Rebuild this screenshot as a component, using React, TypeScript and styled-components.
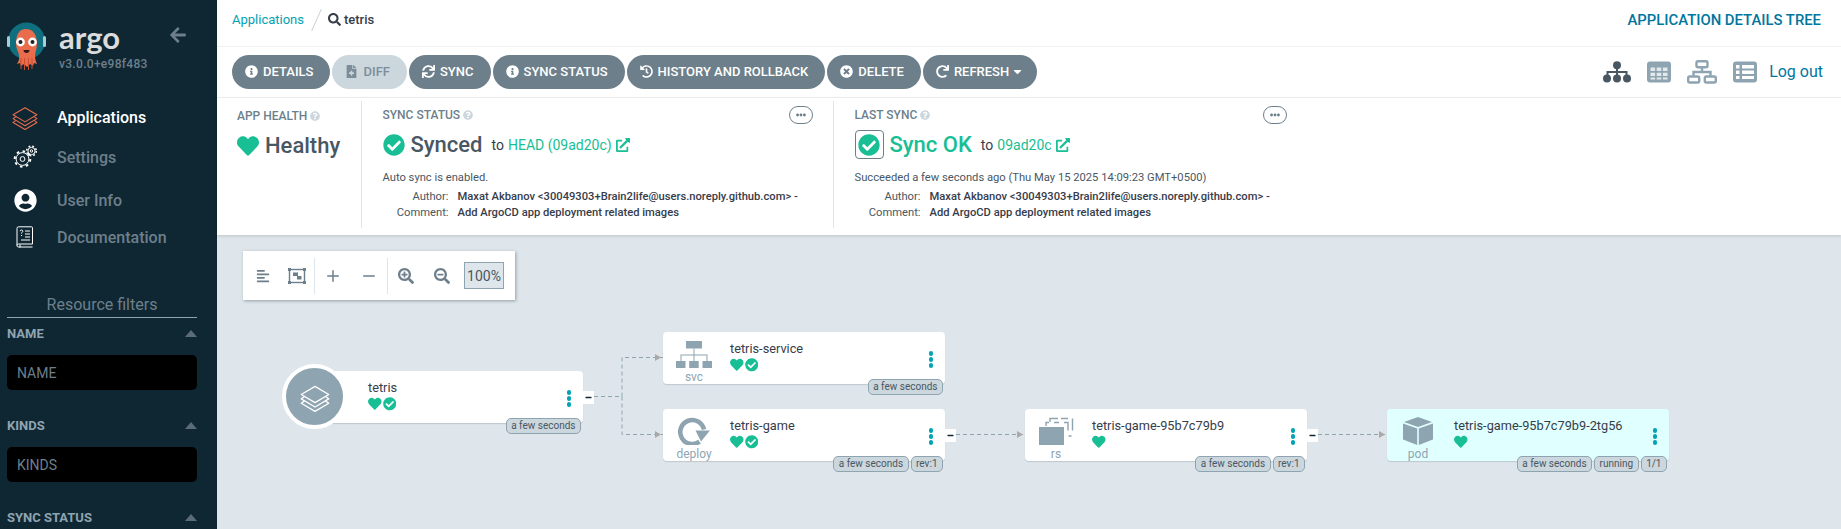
import React from 'react';
import styled, { createGlobalStyle } from 'styled-components';
import {
  FaArrowLeft,
  FaCaretDown,
  FaCheckCircle,
  FaEllipsisH,
  FaExternalLinkAlt,
  FaFileMedical,
  FaHeart,
  FaHistory,
  FaInfoCircle,
  FaMinus,
  FaQuestionCircle,
  FaRedo,
  FaSearch,
  FaSearchMinus,
  FaSearchPlus,
  FaSync,
  FaTimesCircle,
  FaUserCircle,
  FaAlignLeft,
} from 'react-icons/fa';
import { Minus, Plus } from 'lucide-react';

const GlobalStyle = createGlobalStyle`
  html, body {
    margin: 0;
    height: 100%;
    overflow: hidden;
    font-family: Roboto, "Liberation Sans", sans-serif;
    color: #495763;
  }
`;

const GREEN = '#18be94';
const GREY = '#8fa4b1';

const LayersIcon = ({ color, size }: { color: string; size: number }) => (
  <svg width={size} height={size} viewBox="0 0 24 24" fill="none" stroke={color} strokeWidth="1" strokeLinejoin="round">
    <path d="M12 3.5 23 10 12 16.5 1 10Z" />
    <path d="M3.6 11.6 1 13.5 12 20 23 13.5 20.4 11.6" />
    <path d="M3.6 15.1 1 17 12 23.5 23 17 20.4 15.1" />
  </svg>
);

const GearsIcon = () => (
  <svg width="24" height="24" viewBox="0 0 24 24" fill="none" stroke="#fff">
    <circle cx="9.5" cy="14" r="6.4" strokeWidth="1" />
    <circle cx="9.5" cy="14" r="7.8" strokeWidth="2" strokeDasharray="2.6 3.5" />
    <circle cx="9.5" cy="14" r="2.4" strokeWidth="1" />
    <circle cx="18.5" cy="6" r="3.6" strokeWidth="1" />
    <circle cx="18.5" cy="6" r="4.8" strokeWidth="1.6" strokeDasharray="1.8 2" />
    <circle cx="18.5" cy="6" r="1.2" strokeWidth="1" />
  </svg>
);

const DocsIcon = () => (
  <svg width="18" height="22" viewBox="0 0 18 22" fill="none" stroke="#fff" strokeWidth="1">
    <path d="M2.5.8h13a1 1 0 0 1 1 1V18H2.5a1.5 1.5 0 0 0 0 3H16.5M1 19.5V2.3A1.5 1.5 0 0 1 2.5.8" />
    <path d="M4 21.5v-3M9 5h5M9 8h5M9 11h5M5 14h9" />
    <path d="M4.2 5.2c0-1.6 2.6-1.6 2.6 0 0 1.1-1.3 1-1.3 2.4M5.5 9v1" />
  </svg>
);

const ArgoLogo = () => (
  <svg width="40" height="50" viewBox="0 0 40 50">
    <circle cx="19.5" cy="19" r="18.5" fill="#0f6f7e" />
    <rect x="0" y="14" width="3" height="11" rx="1.5" fill="#a9cdd6" />
    <rect x="36" y="14" width="3" height="11" rx="1.5" fill="#a9cdd6" />
    <path d="M9 22C9 11 13 7 19 7s11 4 11 15c0 5-2 8-2 12 0 3 1 6 2 8l-3-1-1 3-3-2-3 3-3-3-3 2-1-3-3 1c1-2 3-5 2-8 0-4-3-7-3-12Z" fill="#e96d4c" />
    <path d="M14 36v11M17.5 36v12M21.5 36v12M25 36v11" stroke="#c9502f" strokeWidth="1" />
    <circle cx="13.5" cy="20" r="4.4" fill="#fff" />
    <circle cx="25.5" cy="20" r="4.4" fill="#fff" />
    <circle cx="13.5" cy="20" r="2" fill="#222" />
    <circle cx="25.5" cy="20" r="2" fill="#222" />
    <path d="M16.5 28h6c0 4-6 4-6 0Z" fill="#2c1a16" />
  </svg>
);

const TreeViewIcon = () => (
  <svg width="28" height="22" viewBox="0 0 28 22" fill="#495763">
    <circle cx="14" cy="4.2" r="4" />
    <circle cx="4" cy="17.5" r="4" />
    <circle cx="14" cy="17.5" r="4" />
    <circle cx="24" cy="17.5" r="4" />
    <path d="M13 6h2v4h9.5v5h-2v-3H15v3h-2v-3H5.5v3h-2v-5H13Z" />
  </svg>
);

const GridViewIcon = () => (
  <svg width="24" height="22" viewBox="0 0 24 22">
    <rect y="0.5" width="24" height="21" rx="3" fill={GREY} />
    <path d="M3.5 6.5h4.6v3.5H3.5ZM9.7 6.5h4.6v3.5H9.7ZM15.9 6.5h4.6v3.5h-4.6ZM3.5 11.7h4.6v3.3H3.5ZM9.7 11.7h4.6v3.3H9.7ZM15.9 11.7h4.6v3.3h-4.6ZM3.5 16.6h4.6v2H3.5ZM9.7 16.6h4.6v2H9.7ZM15.9 16.6h4.6v2h-4.6Z" fill="#fff" fillOpacity="0.75" />
  </svg>
);

const NetworkViewIcon = () => (
  <svg width="30" height="24" viewBox="0 0 30 24" fill="none" stroke={GREY} strokeWidth="2.4">
    <rect x="9.5" y="1.2" width="11" height="6" rx="1.5" />
    <rect x="1.2" y="16.5" width="11" height="6" rx="1.5" />
    <rect x="17.8" y="16.5" width="11" height="6" rx="1.5" />
    <path d="M15 7v5M6.5 16.5V12h17v4.5" />
  </svg>
);

const ListViewIcon = () => (
  <svg width="24" height="22" viewBox="0 0 24 22">
    <rect y="0.5" width="24" height="21" rx="3" fill={GREY} />
    <path d="M3 4h3.5v3.5H3ZM9 4h12v3.5H9ZM3 9.5h3.5V13H3ZM9 9.5h12V13H9ZM3 15h3.5v3H3ZM9 15h12v3H9Z" fill="#fff" />
  </svg>
);

const FitIcon = () => (
  <svg width="18" height="16" viewBox="0 0 18 16" fill="none">
    <rect x="1.5" y="1.5" width="15" height="13" stroke="#6d7f8b" strokeWidth="1.4" />
    <path d="M0 0h3v3H0ZM15 0h3v3h-3ZM0 13h3v3H0ZM15 13h3v3h-3Z" fill="#6d7f8b" />
    <path d="M5 4.5h5v3.5H5ZM9 8h4.5v3.5H9Z" fill="#6d7f8b" />
  </svg>
);

const SvcIcon = () => (
  <svg width="36" height="27" viewBox="0 0 36 27" fill={GREY}>
    <rect x="10" y="0" width="16" height="7.5" />
    <rect x="0" y="20" width="9.5" height="7" />
    <rect x="13.2" y="20" width="9.5" height="7" />
    <rect x="26.5" y="20" width="9.5" height="7" />
    <path d="M17.5 7.5h1v6H31.5V20h-1v-5.5H18.5V20h-1v-5.5H5.5V20h-1v-6.5H17.5Z" />
  </svg>
);

const DeployIcon = () => (
  <svg width="34" height="28" viewBox="0 0 34 28">
    <path d="M22.5 24.6A12 12 0 1 1 27 12.5" fill="none" stroke={GREY} strokeWidth="4.6" />
    <path d="M18.5 13.5H33L24 24.5Z" fill={GREY} />
  </svg>
);

const RsIcon = () => (
  <svg width="36" height="28" viewBox="0 0 36 28" fill="none">
    <path d="M12 5V1.5h8M23 1.5h7M8 9V5.5h3M16 5.5h5M26 5.5h4v8M34.5 1.5v12M30.5 19h3" stroke={GREY} strokeWidth="1.4" />
    <rect x="1" y="10" width="25" height="18" fill={GREY} />
  </svg>
);

const PodIcon = () => (
  <svg width="30" height="28" viewBox="0 0 30 28" fill={GREY}>
    <path d="M15 0 29 5 15 10 1 5Z" />
    <path d="M0 6.5 14.2 11.6V28L0 22.5Z" />
    <path d="M30 6.5 15.8 11.6V28L30 22.5Z" />
  </svg>
);

type NodeData = {
  name: string;
  kind?: string;
  icon?: React.ReactNode;
  x: number;
  y: number;
  tags: string[];
  synced: boolean;
  collapse?: boolean;
  pod?: boolean;
};

const nodes: NodeData[] = [
  { name: 'tetris', x: 97, y: 136, tags: ['a few seconds'], synced: true, collapse: true },
  { name: 'tetris-service', kind: 'svc', icon: <SvcIcon />, x: 446, y: 97, tags: ['a few seconds'], synced: true },
  { name: 'tetris-game', kind: 'deploy', icon: <DeployIcon />, x: 446, y: 174, tags: ['a few seconds', 'rev:1'], synced: true, collapse: true },
  { name: 'tetris-game-95b7c79b9', kind: 'rs', icon: <RsIcon />, x: 808, y: 174, tags: ['a few seconds', 'rev:1'], synced: false, collapse: true },
  { name: 'tetris-game-95b7c79b9-2tg56', kind: 'pod', icon: <PodIcon />, x: 1170, y: 174, tags: ['a few seconds', 'running', '1/1'], synced: false, pod: true },
];

const actions = [
  { label: 'DETAILS', icon: <FaInfoCircle /> },
  { label: 'DIFF', icon: <FaFileMedical />, disabled: true },
  { label: 'SYNC', icon: <FaSync /> },
  { label: 'SYNC STATUS', icon: <FaInfoCircle /> },
  { label: 'HISTORY AND ROLLBACK', icon: <FaHistory /> },
  { label: 'DELETE', icon: <FaTimesCircle /> },
  { label: 'REFRESH', icon: <FaRedo />, caret: true },
];

const CommitInfo = () => (
  <CommitGrid>
    <CommitLabel>Author:</CommitLabel>
    <CommitValue>Maxat Akbanov &lt;30049303+Brain2life@users.noreply.github.com&gt; -</CommitValue>
    <CommitLabel>Comment:</CommitLabel>
    <CommitValue>Add ArgoCD app deployment related images</CommitValue>
  </CommitGrid>
);

const App: React.FC = () => {
  return (
    <Page>
      <GlobalStyle />
      <Sidebar>
        <Brand>
          <ArgoLogo />
          <BrandText>
            <BrandName>argo</BrandName>
            <Version>v3.0.0+e98f483</Version>
          </BrandText>
          <BackArrow><FaArrowLeft /></BackArrow>
        </Brand>
        <Nav>
          <NavItem $height={40} $active>
            <NavIcon><LayersIcon color="#e96d4c" size={26} /></NavIcon>
            Applications
          </NavItem>
          <NavItem $height={40}>
            <NavIcon><GearsIcon /></NavIcon>
            Settings
          </NavItem>
          <NavItem $height={46}>
            <NavIcon $white><FaUserCircle /></NavIcon>
            User Info
          </NavItem>
          <NavItem $height={28}>
            <NavIcon><DocsIcon /></NavIcon>
            Documentation
          </NavItem>
        </Nav>
        <Filters>
          <FiltersTitle>Resource filters</FiltersTitle>
          <FilterHead>NAME<Caret /></FilterHead>
          <FilterInput placeholder="NAME" readOnly />
          <FilterHead>KINDS<Caret /></FilterHead>
          <FilterInput placeholder="KINDS" readOnly />
          <FilterHead>SYNC STATUS<Caret /></FilterHead>
        </Filters>
      </Sidebar>
      <Main>
        <TopBar>
          <Crumbs>
            <CrumbLink>Applications</CrumbLink>
            <CrumbSlash />
            <CrumbCurrent><FaSearch /> tetris</CrumbCurrent>
          </Crumbs>
          <PageTitle>APPLICATION DETAILS TREE</PageTitle>
        </TopBar>
        <ActionBar>
          <Actions>
            {actions.map((a) => (
              <ActionButton key={a.label} $disabled={a.disabled}>
                {a.icon}
                {a.label}
                {a.caret && <CaretMark><FaCaretDown /></CaretMark>}
              </ActionButton>
            ))}
          </Actions>
          <ViewSwitch>
            <TreeViewIcon />
            <GridViewIcon />
            <NetworkViewIcon />
            <ListViewIcon />
            <LogOut>Log out</LogOut>
          </ViewSwitch>
        </ActionBar>
        <StatusPanel>
          <HealthColumn>
            <StatusLabel $offset={1}>APP HEALTH <FaQuestionCircle /></StatusLabel>
            <StatusHeadline>
              <BigIcon><FaHeart /></BigIcon>
              <BigText>Healthy</BigText>
            </StatusHeadline>
          </HealthColumn>
          <StatusColumn $width={472}>
            <ColumnHead>
              <StatusLabel>SYNC STATUS <FaQuestionCircle /></StatusLabel>
              <MoreButton><FaEllipsisH /></MoreButton>
            </ColumnHead>
            <StatusHeadline>
              <BigIcon><FaCheckCircle /></BigIcon>
              <BigText>Synced</BigText>
              <ToText>to</ToText>
              <RevLink>HEAD (09ad20c) <FaExternalLinkAlt /></RevLink>
            </StatusHeadline>
            <StatusMessage>Auto sync is enabled.</StatusMessage>
            <CommitInfo />
          </StatusColumn>
          <StatusColumn $width={473} $last>
            <ColumnHead>
              <StatusLabel>LAST SYNC <FaQuestionCircle /></StatusLabel>
              <MoreButton><FaEllipsisH /></MoreButton>
            </ColumnHead>
            <StatusHeadline>
              <BoxedIcon><FaCheckCircle /></BoxedIcon>
              <BigText $green>Sync OK</BigText>
              <ToText>to</ToText>
              <RevLink>09ad20c <FaExternalLinkAlt /></RevLink>
            </StatusHeadline>
            <StatusMessage>Succeeded a few seconds ago (Thu May 15 2025 14:09:23 GMT+0500)</StatusMessage>
            <CommitInfo />
          </StatusColumn>
        </StatusPanel>
        <Canvas>
          <ZoomBar>
            <ZoomTool $width={34}><FaAlignLeft /></ZoomTool>
            <ZoomTool $width={34}><FitIcon /></ZoomTool>
            <ZoomDivider />
            <ZoomTool $width={36}><Plus size={18} strokeWidth={2} /></ZoomTool>
            <ZoomTool $width={36}><Minus size={18} strokeWidth={2} /></ZoomTool>
            <ZoomDivider />
            <ZoomTool $width={36}><FaSearchPlus size={16} /></ZoomTool>
            <ZoomTool $width={36}><FaSearchMinus size={16} /></ZoomTool>
            <ZoomLevel>100%</ZoomLevel>
          </ZoomBar>
          <Edges width="1624" height="294" fill="none">
            <g stroke={GREY} strokeWidth="1" strokeDasharray="4 3">
              <path d="M377 161.5H405M405 161.5V122.5H446M405 161.5V199.5H446" />
              <path d="M739 199.5H808" />
              <path d="M1101 199.5H1170" />
            </g>
            <g fill="#a9a9a9">
              <path d="M438 119 444 122.5 438 126Z" />
              <path d="M438 196 444 199.5 438 203Z" />
              <path d="M800 196 806 199.5 800 203Z" />
              <path d="M1162 196 1168 199.5 1162 203Z" />
            </g>
          </Edges>
          {nodes.map((n) => (
            <GraphNode key={n.name} $x={n.x} $y={n.y} $root={!n.kind} $pod={n.pod}>
              {n.kind ? (
                <KindColumn>
                  <KindIcon>{n.icon}</KindIcon>
                  <KindLabel>{n.kind}</KindLabel>
                </KindColumn>
              ) : (
                <RootCircle><LayersIcon color="#fff" size={30} /></RootCircle>
              )}
              <NodeBody>
                <NodeName>{n.name}</NodeName>
                <NodeStatus>
                  <FaHeart />
                  {n.synced && <FaCheckCircle />}
                </NodeStatus>
              </NodeBody>
              <NodeMenu>
                <Dot />
                <Dot />
                <Dot />
              </NodeMenu>
              {n.collapse && <Collapse><FaMinus /></Collapse>}
              <NodeTags>
                {n.tags.map((t) => (
                  <NodeTag key={t}>{t}</NodeTag>
                ))}
              </NodeTags>
            </GraphNode>
          ))}
        </Canvas>
      </Main>
    </Page>
  );
};

export default App;

const Page = styled.div`
  display: flex;
  width: 100vw;
  height: 100vh;
  overflow: hidden;
`;

const Sidebar = styled.aside`
  width: 217px;
  flex-shrink: 0;
  background: #0f2733;
  overflow: hidden;
`;

const Brand = styled.div`
  display: flex;
  height: 97px;
  padding: 22px 0 0 7px;
  box-sizing: border-box;
  position: relative;
`;

const BrandText = styled.div`
  display: flex;
  flex-direction: column;
  margin-left: 12px;
`;

const BrandName = styled.div`
  font-family: Lato, Roboto, sans-serif;
  font-size: 31px;
  font-weight: 700;
  line-height: 30px;
  color: #dcdcdc;
`;

const Version = styled.div`
  font-size: 12px;
  font-weight: 500;
  line-height: 14px;
  letter-spacing: 0.3px;
  margin-top: 5px;
  color: #6d7f8b;
`;

const BackArrow = styled.span`
  position: absolute;
  left: 169px;
  top: 26px;
  font-size: 18px;
  color: #6d7f8b;
`;

const Nav = styled.nav`
  display: flex;
  flex-direction: column;
`;

const NavItem = styled.div<{ $height: number; $active?: boolean }>`
  display: flex;
  align-items: center;
  height: ${(p) => p.$height}px;
  font-size: 16px;
  font-weight: 500;
  color: ${(p) => (p.$active ? '#fff' : '#6d7f8b')};
`;

const NavIcon = styled.span<{ $white?: boolean }>`
  display: flex;
  align-items: center;
  justify-content: center;
  width: 50px;
  margin-right: 7px;
  color: #fff;
  font-size: ${(p) => (p.$white ? '23px' : '24px')};
`;

const Filters = styled.div`
  margin-top: 41px;
  padding: 0 20px 0 7px;
`;

const FiltersTitle = styled.div`
  font-size: 16px;
  line-height: 25px;
  text-align: center;
  color: #6d7f8b;
  border-bottom: 1px solid #8fa4b1;
  height: 25px;
  margin-bottom: 7px;
`;

const FilterHead = styled.div`
  display: flex;
  align-items: center;
  justify-content: space-between;
  font-size: 13px;
  font-weight: 700;
  height: 17px;
  color: #8fa4b1;
`;

const Caret = styled.span`
  width: 0;
  height: 0;
  border-left: 6.5px solid transparent;
  border-right: 6.5px solid transparent;
  border-bottom: 7px solid #5b6c78;
`;

const FilterInput = styled.input`
  display: block;
  width: 100%;
  height: 35px;
  margin: 13px 0 27px;
  padding: 0 10px;
  box-sizing: border-box;
  border: 0;
  border-radius: 5px;
  background: #000;
  font-family: Roboto, sans-serif;
  font-size: 14px;
  outline: none;

  &::placeholder {
    color: #6d7f8b;
    opacity: 1;
  }
`;

const Main = styled.main`
  flex: 1;
  min-width: 0;
  display: flex;
  flex-direction: column;
`;

const TopBar = styled.header`
  display: flex;
  align-items: center;
  justify-content: space-between;
  height: 47px;
  padding: 0 20px 7px 15px;
  box-sizing: border-box;
  border-bottom: 1px solid #eff2f4;
  background: #fff;
`;

const Crumbs = styled.div`
  display: flex;
  align-items: center;
  font-size: 13px;
`;

const CrumbLink = styled.span`
  color: #00a2b3;
`;

const CrumbSlash = styled.span`
  width: 1px;
  height: 24px;
  margin: 0 11px 0 12px;
  background: #ccd6dd;
  transform: rotate(24deg);
`;

const CrumbCurrent = styled.span`
  display: flex;
  align-items: center;
  gap: 3px;
  font-weight: 500;
  color: #363c4a;

  svg {
    font-size: 13px;
  }
`;

const PageTitle = styled.div`
  font-size: 14.85px;
  font-weight: 500;
  color: #00769e;
`;

const ActionBar = styled.div`
  display: flex;
  align-items: center;
  justify-content: space-between;
  height: 51px;
  padding: 0 18px 1px 15px;
  box-sizing: border-box;
  border-bottom: 1px solid #eff2f4;
  background: #fff;
`;

const Actions = styled.div`
  display: flex;
  gap: 2px;
`;

const ActionButton = styled.div<{ $disabled?: boolean }>`
  display: flex;
  align-items: center;
  gap: 5px;
  height: 34px;
  padding: 0 17px 0 13px;
  border-radius: 17px;
  font-size: 13px;
  font-weight: 500;
  white-space: nowrap;
  color: ${(p) => (p.$disabled ? '#7c8d99' : '#fff')};
  background: ${(p) => (p.$disabled ? '#ccd6dd' : '#6d7f8b')};

  svg {
    font-size: 13px;
  }
`;

const CaretMark = styled.span`
  display: flex;
  margin: 0 -4px 0 -3px;
`;

const ViewSwitch = styled.div`
  display: flex;
  align-items: center;
  gap: 16px;
`;

const LogOut = styled.span`
  font-size: 16px;
  margin-left: -4px;
  color: #00769e;
`;

const StatusPanel = styled.section`
  display: flex;
  align-items: stretch;
  height: 137px;
  padding: 3px 0 7px 20px;
  box-sizing: border-box;
  background: #fff;
  box-shadow: 0 1px 3px rgba(0, 0, 0, 0.15);
  position: relative;
  z-index: 1;
`;

const HealthColumn = styled.div`
  width: 125px;
  padding-top: 5px;
  box-sizing: border-box;
  border-right: 1px solid #dee6eb;
`;

const StatusColumn = styled.div<{ $width: number; $last?: boolean }>`
  width: ${(p) => p.$width}px;
  padding: 5px 20px 0 20.5px;
  box-sizing: border-box;
  border-right: ${(p) => (p.$last ? 'none' : '1px solid #dee6eb')};
`;

const ColumnHead = styled.div`
  display: flex;
  justify-content: space-between;
`;

const StatusLabel = styled.div<{ $offset?: number }>`
  display: flex;
  align-items: center;
  gap: 3px;
  height: 18px;
  margin-top: ${(p) => p.$offset ?? 0}px;
  font-size: 12px;
  font-weight: 500;
  color: #6d7f8b;

  svg {
    font-size: 10px;
    color: #ccd6dd;
  }
`;

const MoreButton = styled.div`
  display: flex;
  align-items: center;
  justify-content: center;
  width: 24px;
  height: 18px;
  box-sizing: border-box;
  border: 1px solid #6d7f8b;
  border-radius: 9px;
  font-size: 10px;
  color: #6d7f8b;
`;

const StatusHeadline = styled.div`
  display: flex;
  align-items: center;
  height: 29px;
  margin-top: 6px;
`;

const BigIcon = styled.span`
  display: flex;
  margin-right: 6px;
  font-size: 22px;
  color: ${GREEN};
`;

const BoxedIcon = styled.span`
  display: flex;
  align-items: center;
  justify-content: center;
  width: 29px;
  height: 29px;
  margin-right: 6px;
  box-sizing: border-box;
  border: 1px solid #6d7f8b;
  border-radius: 4px;
  font-size: 22px;
  color: ${GREEN};
`;

const BigText = styled.span<{ $green?: boolean }>`
  font-size: 22px;
  font-weight: 500;
  color: ${(p) => (p.$green ? GREEN : '#495763')};
`;

const ToText = styled.span`
  margin-left: 9px;
  font-size: 14px;
  color: #363c4a;
`;

const RevLink = styled.span`
  display: flex;
  align-items: center;
  gap: 4px;
  margin-left: 4px;
  font-size: 14px;
  color: ${GREEN};

  svg {
    font-size: 14px;
  }
`;

const StatusMessage = styled.div`
  margin-top: 11px;
  font-size: 11.2px;
  line-height: 16px;
  color: #495763;
`;

const CommitGrid = styled.div`
  display: grid;
  grid-template-columns: 66px 1fr;
  column-gap: 9px;
  margin-top: 3px;
  font-size: 11.2px;
  line-height: 16px;
`;

const CommitLabel = styled.span`
  text-align: right;
  color: #495763;
`;

const CommitValue = styled.span`
  font-weight: 500;
  color: #363c4a;
`;

const Canvas = styled.div`
  flex: 1;
  position: relative;
  background: #dee6eb;
  overflow: hidden;
`;

const ZoomBar = styled.div`
  display: flex;
  align-items: center;
  width: 272px;
  height: 49px;
  margin: 16px 0 0 26px;
  padding-left: 3px;
  box-sizing: border-box;
  background: #fff;
  box-shadow: 1px 1px 3px rgba(73, 87, 99, 0.5);
`;

const ZoomTool = styled.span<{ $width: number }>`
  display: flex;
  align-items: center;
  justify-content: center;
  width: ${(p) => p.$width}px;
  font-size: 14px;
  color: #6d7f8b;
`;

const ZoomDivider = styled.span`
  width: 1px;
  height: 36px;
  background: #dee6eb;
`;

const ZoomLevel = styled.span`
  display: flex;
  align-items: center;
  justify-content: center;
  width: 40px;
  height: 27px;
  margin-left: 4px;
  box-sizing: border-box;
  border: 1px solid #8fa4b1;
  background: #dee6eb;
  font-size: 14px;
  color: #495763;
`;

const Edges = styled.svg`
  position: absolute;
  left: 0;
  top: 0;
`;

const GraphNode = styled.div<{ $x: number; $y: number; $root: boolean; $pod?: boolean }>`
  position: absolute;
  left: ${(p) => p.$x}px;
  top: ${(p) => p.$y}px;
  width: ${(p) => (p.$root ? 269 : 282)}px;
  height: 52px;
  display: flex;
  padding-left: ${(p) => (p.$root ? 54 : 0)}px;
  box-sizing: border-box;
  border-radius: 4px;
  background: ${(p) => (p.$pod ? '#e0ffff' : '#fff')};
  box-shadow: 0 1px 1px rgba(73, 87, 99, 0.2);
`;

const KindColumn = styled.div`
  width: 67px;
  flex-shrink: 0;
  display: flex;
  flex-direction: column;
  align-items: center;
  padding-right: 5px;
  box-sizing: border-box;
`;

const KindIcon = styled.div`
  display: flex;
  align-items: flex-end;
  justify-content: center;
  height: 38px;
`;

const KindLabel = styled.div`
  font-size: 12px;
  line-height: 14px;
  margin-top: 2px;
  color: #8fa4b1;
`;

const RootCircle = styled.div`
  position: absolute;
  left: -32px;
  top: -7px;
  display: flex;
  align-items: center;
  justify-content: center;
  width: 65px;
  height: 65px;
  box-sizing: border-box;
  border: 4px solid #fff;
  border-radius: 50%;
  background: #8fa4b1;
`;

const NodeBody = styled.div`
  padding-top: 9px;
`;

const NodeName = styled.div`
  font-size: 12.75px;
  line-height: 16px;
  color: #363c4a;
`;

const NodeStatus = styled.div`
  display: flex;
  align-items: center;
  gap: 1px;
  margin-top: 1px;
  font-size: 13.5px;
  height: 14px;
  color: ${GREEN};
`;

const NodeMenu = styled.div`
  position: absolute;
  right: 12px;
  top: 19px;
  display: flex;
  flex-direction: column;
  gap: 1.7px;
`;

const Dot = styled.span`
  width: 4.5px;
  height: 4.5px;
  border-radius: 50%;
  background: #00a2b3;
`;

const Collapse = styled.div`
  position: absolute;
  right: -11px;
  top: 20px;
  display: flex;
  align-items: center;
  justify-content: center;
  width: 11px;
  height: 13px;
  font-size: 7px;
  color: #0f2733;
  background: #fff;
`;

const NodeTags = styled.div`
  position: absolute;
  right: 2px;
  bottom: -11px;
  display: flex;
  gap: 2px;
`;

const NodeTag = styled.span`
  height: 16px;
  padding: 0 4.5px;
  box-sizing: border-box;
  border: 1px solid #8fa4b1;
  border-radius: 5px;
  background: #ccd6dd;
  font-size: 10px;
  line-height: 14px;
  color: #495763;
  white-space: nowrap;
`;
